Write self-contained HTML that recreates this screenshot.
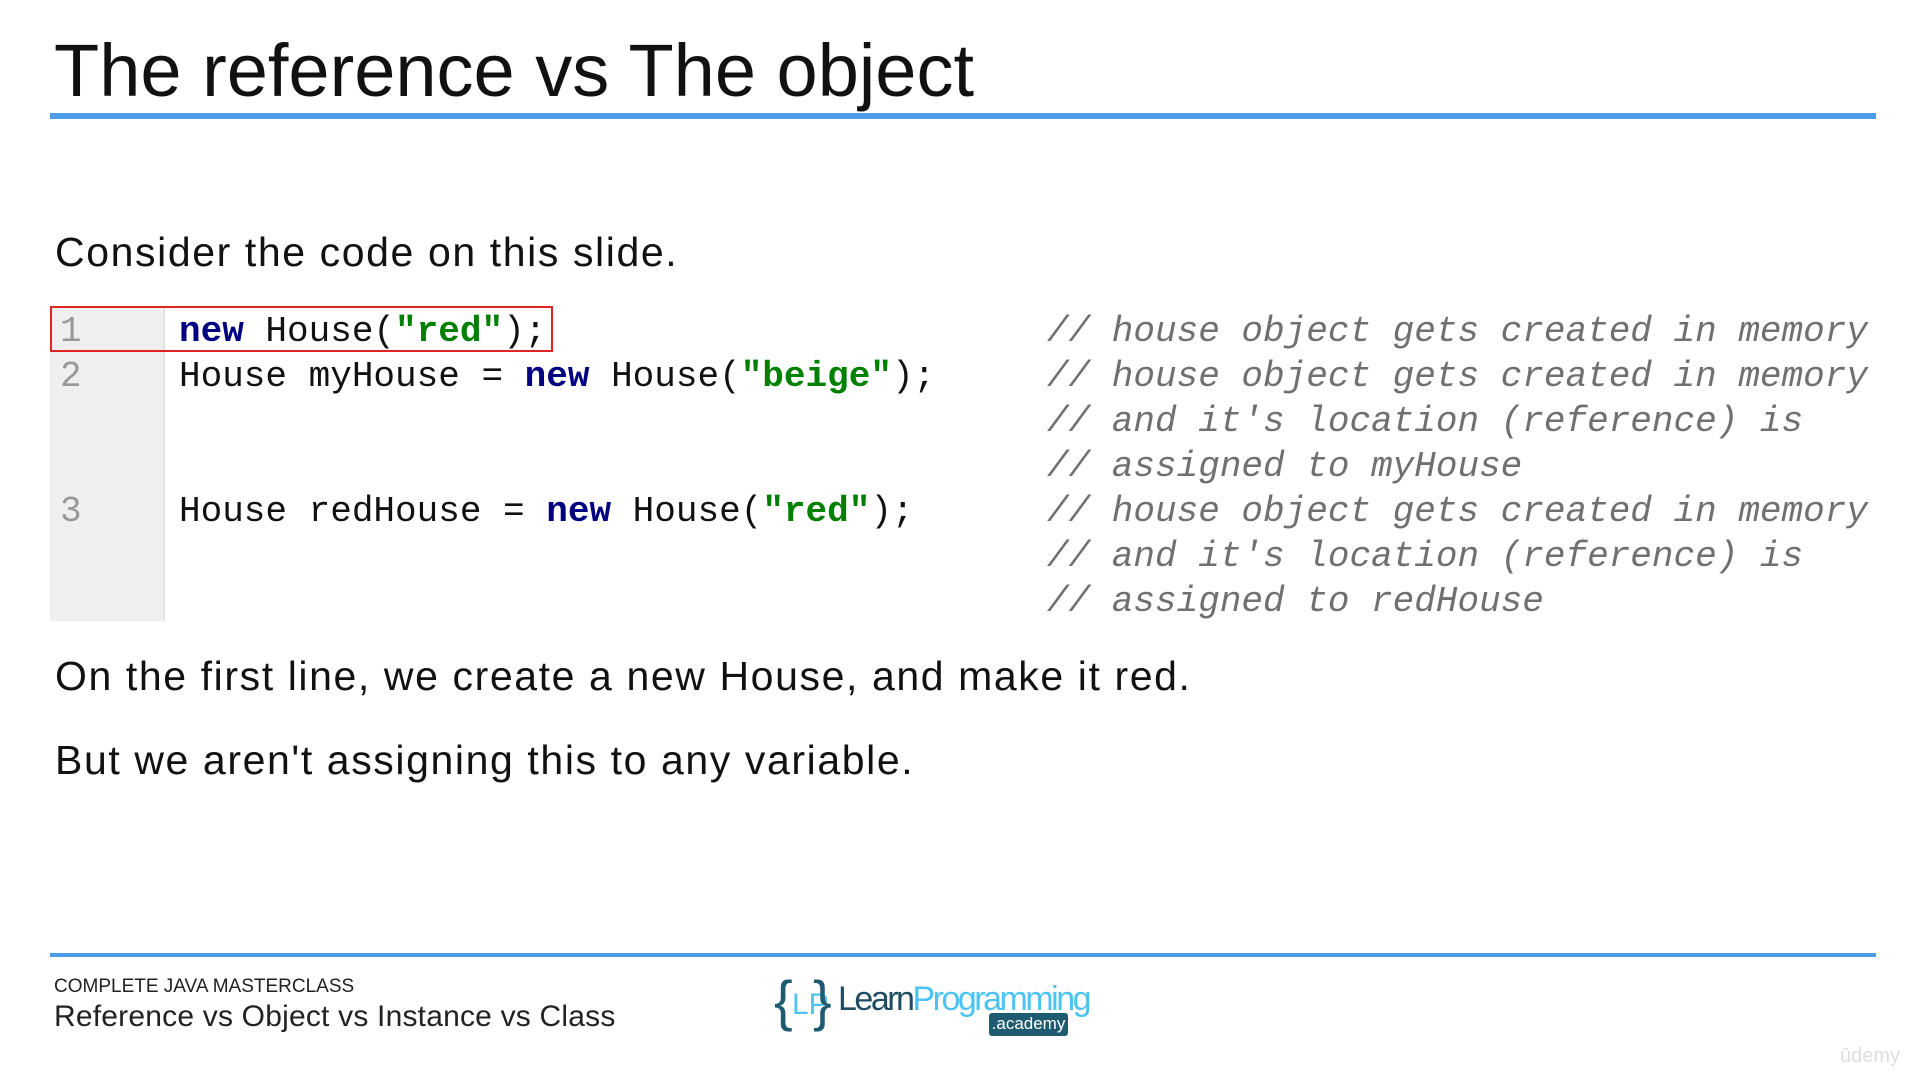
<!DOCTYPE html>
<html><head><meta charset="utf-8"><style>
body{margin:0;width:1920px;height:1080px;background:#fff;position:relative;overflow:hidden;font-family:"Liberation Sans",sans-serif;color:#111}
.a{position:absolute;white-space:nowrap}
.code{font-family:"Liberation Mono",monospace;font-size:36px;line-height:45px}
.kw{color:#000080;font-weight:bold}.st{color:#008000;font-weight:bold}
.cm{color:#707070;font-style:italic}
.b{font-size:41px;letter-spacing:1.6px}
</style></head><body>
<div class="a" style="left:54px;top:28px;font-size:74px;letter-spacing:0px">The reference vs The object</div>
<div class="a" style="left:50px;top:113px;width:1826px;height:6px;background:#4b9ce9"></div>
<div class="a b" style="left:55px;top:229px">Consider the code on this slide.</div>
<div class="a" style="left:50px;top:306px;width:113px;height:315px;background:#efefef;border-right:2px solid #e2e2e2"></div>
<div class="a code" style="left:60px;top:309px;color:#999">1<br>2<br><br><br>3</div>
<div class="a code" style="left:179px;top:309px"><span class="kw">new</span> House(<span class="st">"red"</span>);<br>House myHouse = <span class="kw">new</span> House(<span class="st">"beige"</span>);<br><br><br>House redHouse = <span class="kw">new</span> House(<span class="st">"red"</span>);</div>
<div class="a code cm" style="left:1047px;top:309px">// house object gets created in memory<br>// house object gets created in memory<br>// and it's location (reference) is<br>// assigned to myHouse<br>// house object gets created in memory<br>// and it's location (reference) is<br>// assigned to redHouse</div>
<div class="a" style="left:50px;top:306px;width:499px;height:42px;border:2px solid #e02424"></div>
<div class="a b" style="left:55px;top:653px">On the first line, we create a new House, and make it red.</div>
<div class="a b" style="left:55px;top:737px">But we aren't assigning this to any variable.</div>
<div class="a" style="left:50px;top:953px;width:1826px;height:4px;background:#4b9ce9"></div>
<div class="a" style="left:54px;top:976px;font-size:19px;color:#222">COMPLETE JAVA MASTERCLASS</div>
<div class="a" style="left:54px;top:1000px;font-size:30px;color:#222;letter-spacing:0.2px">Reference vs Object vs Instance vs Class</div>
<div class="a" style="left:774px;top:968px;font-size:56px;color:#1e5a70">{</div>
<div class="a" style="left:792px;top:988px;font-size:30px;color:#4cc3f0">LP</div>
<div class="a" style="left:813px;top:968px;font-size:56px;color:#1e5a70">}</div>
<div class="a" style="left:838px;top:980px;font-size:34px;letter-spacing:-2.5px"><span style="color:#1e4d63">Learn</span><span style="color:#4cc3f0">Programming</span></div>
<div class="a" style="left:989px;top:1013px;width:79px;height:23px;background:#1e5a70;border-radius:3px;color:#fff;font-size:17px;line-height:22px;text-align:center">.academy</div>
<div class="a" style="left:1840px;top:1045px;font-size:20px;color:#ddd">ūdemy</div>
</body></html>
